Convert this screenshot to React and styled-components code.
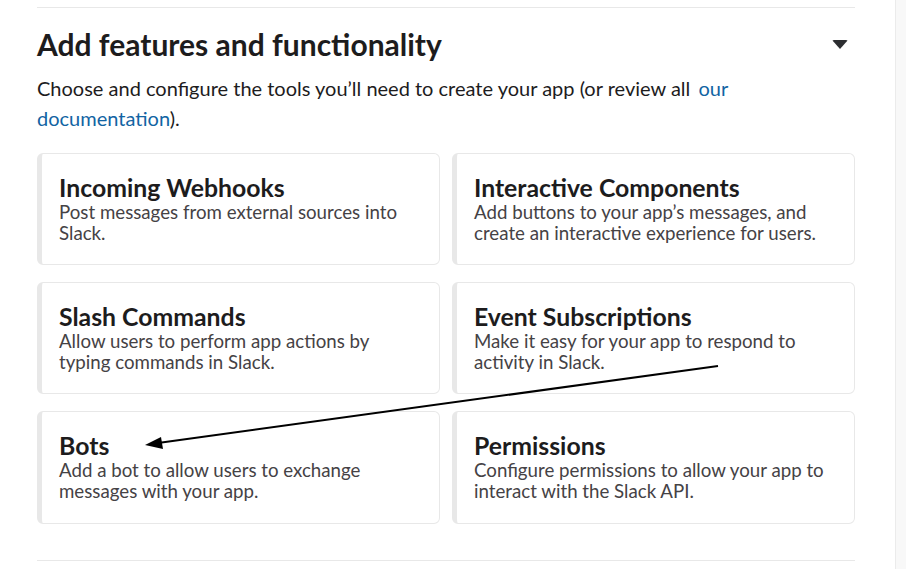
import React from "react";
import styled, { createGlobalStyle } from "styled-components";

const Global = createGlobalStyle`
  html, body { margin: 0; padding: 0; background: #fff; }
  body { font-family: Lato, "Noto Sans", sans-serif; color: #1d1c1d; }
  * { box-sizing: border-box; }
`;

const Page = styled.div`
  display: flex;
  width: 906px;
  height: 569px;
  overflow: hidden;
  position: relative;
`;

const Main = styled.main`
  flex: 1;
  padding: 7px 40px 0 37px;
`;

const Strip = styled.div`
  width: 11px;
  background: #f8f8f8;
  border-left: 1px solid #ebebeb;
`;

const Section = styled.section`
  border-top: 1px solid #e8e8e8;
  border-bottom: 1px solid #e8e8e8;
  padding: 18px 0 36px;
`;

const HeaderRow = styled.div`
  display: flex;
  align-items: center;
  justify-content: space-between;
`;

const Title = styled.h2`
  margin: 0;
  font-size: 30px;
  line-height: 36px;
  font-weight: 700;
  color: #1d1c1d;
`;

const Caret = styled.span`
  width: 0;
  height: 0;
  margin-right: 7px;
  border-left: 8px solid transparent;
  border-right: 8px solid transparent;
  border-top: 9px solid #2c2d30;
  border-radius: 2px;
`;

const Intro = styled.p`
  margin: 11px 0 20px;
  font-size: 20px;
  line-height: 30px;
  color: #1d1c1d;
`;

const Link = styled.a`
  color: #1264a3;
  text-decoration: none;
  margin-left: 3px;
`;

const Grid = styled.div`
  display: grid;
  grid-template-columns: 403px 403px;
  column-gap: 12px;
  row-gap: 17px;
`;

const Card = styled.div`
  height: ${(p) => p.$h}px;
  border: 1px solid #e8e8e8;
  border-left: 5px solid #e8e8e8;
  border-radius: 6px;
  padding: 20px 14px 0 17px;
  background: #fff;
`;

const CardTitle = styled.div`
  font-size: 24.8px;
  line-height: 28px;
  font-weight: 700;
  color: #1d1c1d;
`;

const CardText = styled.div`
  font-size: 18.7px;
  line-height: 21px;
  color: #454245;
`;

const Arrow = styled.svg`
  position: absolute;
  left: 0;
  top: 0;
  pointer-events: none;
`;

const features = [
  ["Incoming Webhooks", "Post messages from external sources into Slack.", 112],
  ["Interactive Components", "Add buttons to your app’s messages, and create an interactive experience for users.", 112],
  ["Slash Commands", "Allow users to perform app actions by typing commands in Slack.", 112],
  ["Event Subscriptions", "Make it easy for your app to respond to activity in Slack.", 112],
  ["Bots", "Add a bot to allow users to exchange messages with your app.", 113],
  ["Permissions", "Configure permissions to allow your app to interact with the Slack API.", 113],
];

export default function App() {
  return (
    <>
      <Global />
      <Page>
        <Main>
          <Section>
            <HeaderRow>
              <Title>Add features and functionality</Title>
              <Caret />
            </HeaderRow>
            <Intro>
              Choose and configure the tools you’ll need to create your app (or review all
              <Link href="#"> our documentation</Link>).
            </Intro>
            <Grid>
              {features.map(([t, d, h]) => (
                <Card key={t} $h={h}>
                  <CardTitle>{t}</CardTitle>
                  <CardText>{d}</CardText>
                </Card>
              ))}
            </Grid>
          </Section>
        </Main>
        <Strip />
        <Arrow width="906" height="569" viewBox="0 0 906 569">
          <line x1="718" y1="366" x2="158" y2="443" stroke="#000" strokeWidth="2" />
          <polygon points="145,445 161,437 163,449" fill="#000" />
        </Arrow>
      </Page>
    </>
  );
}
